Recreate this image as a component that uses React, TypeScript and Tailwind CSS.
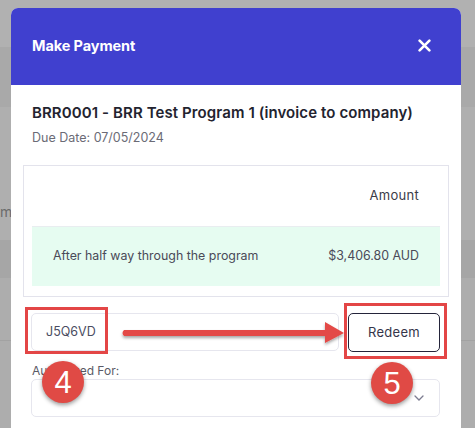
import React from 'react';

const font = "font-['Inter','Noto_Sans',sans-serif]";

const Backdrop: React.FC = () => {
  return (
    <div className="flex flex-col w-full h-full">
      <div className="h-[47px] bg-[#b1b1b1]" />
      <div className="h-[60px] bg-[#a9a9a9]" />
      <div className="h-[133px] bg-[#afafaf] relative">
        <span className="absolute left-0 top-[94px] text-[14px] text-[#6b6b6b]">m</span>
      </div>
      <div className="h-[38px] bg-[#a6a6a6]" />
      <div className="h-[63px] bg-[#adadad] border-b border-[#a2a2a2]" />
      <div className="flex-1 bg-[#adadad]" />
    </div>
  );
};

const Annotations: React.FC = () => {
  return (
    <>
      <div className="absolute left-[25px] top-[307px] w-[83px] h-[47px] border-[3px] border-[#e34646]" />
      <div className="absolute left-[344px] top-[303px] w-[103px] h-[56px] border-[3px] border-[#e34646]" />
      <svg className="absolute left-[118px] top-[318px]" width="230" height="30" viewBox="0 0 230 30">
        <defs>
          <filter id="sh" x="-10%" y="-50%" width="120%" height="200%">
            <feDropShadow dx="0" dy="2" stdDeviation="1.5" floodColor="#000" floodOpacity="0.35" />
          </filter>
        </defs>
        <g filter="url(#sh)">
          <path d="M6 12 L207 12 L207 4 L226 15 L207 25 L207 18 L6 18 Q3 15 6 12 Z" fill="#e34a46" />
        </g>
      </svg>
      {[
        { n: '4', cls: 'left-[42px] top-[361px]' },
        { n: '5', cls: 'left-[371px] top-[362px]' },
      ].map((c) => (
        <div
          key={c.n}
          className={`absolute ${c.cls} w-[42px] h-[42px] rounded-full bg-[#e04a45] shadow-[0_2px_4px_rgba(0,0,0,0.4)] flex items-center justify-center text-white text-[31px] leading-none font-['Liberation_Sans',sans-serif]`}
        >
          {c.n}
        </div>
      ))}
    </>
  );
};

export default function App() {
  return (
    <div className={`relative w-[475px] h-[428px] overflow-hidden ${font}`}>
      <Backdrop />
      <div className="absolute left-[11px] top-[8px] w-[450px] h-[430px] bg-white rounded-t-[7px] overflow-hidden flex flex-col">
        <div className="h-[77px] bg-[#4040cf] flex items-center justify-between pl-[21px] pr-[30px] shrink-0">
          <span className="text-white text-[14.5px] font-bold tracking-[-0.1px] mt-[-1px]">Make Payment</span>
          <svg width="13" height="13" viewBox="0 0 12 12" className="mt-[-2px]">
            <path d="M1.5 1.5 L10.5 10.5 M10.5 1.5 L1.5 10.5" stroke="white" strokeWidth="2.4" strokeLinecap="round" />
          </svg>
        </div>
        <div className="px-[12px] pt-[17px] flex flex-col">
          <div className="px-[9px]">
            <div className="text-[15px] leading-[22px] font-semibold text-[#23232f] tracking-[0.1px]">
              BRR0001 - BRR Test Program 1 (invoice to company)
            </div>
            <div className="text-[12.5px] leading-[18px] text-[#6b6b76] mt-[5px]">Due Date: 07/05/2024</div>
          </div>
          <div className="mt-[18px] border border-[#e3e3ec] h-[132px] px-[8px] flex flex-col">
            <div className="h-[60px] flex items-center justify-end pr-[21px] text-[13px] tracking-[0.3px] text-[#3c3c48]">
              Amount
            </div>
            <div className="h-[60px] bg-[#e6fcf1] border-t border-[#e9edf0] flex items-center justify-between pl-[21px] pr-[21px] text-[12.4px] text-[#4a4a58]">
              <span>After half way through the program</span>
              <span>$3,406.80 AUD</span>
            </div>
          </div>
        </div>
        <div className="pl-[20px] pr-[21px] mt-[16px] flex gap-[9px]">
          <div className="flex-1 h-[38px] border border-[#e6e6ee] rounded-[5px] flex items-center pl-[14px] text-[12.5px] text-[#4a4d62]">
            J5Q6VD
          </div>
          <button className="w-[92px] h-[39px] border border-[#24243a] rounded-[5px] flex items-center justify-center text-[13px] tracking-[0.3px] text-[#35354a]">
            Redeem
          </button>
        </div>
        <div className="pl-[21px] mt-[11px] text-[12px] leading-[16px] text-[#5a5a66]">Authorized For:</div>
        <div className="ml-[20px] mr-[21px] mt-[0px] h-[38px] border border-[#e6e6ee] rounded-[5px] flex items-center justify-end pr-[15px]">
          <svg width="10" height="6" viewBox="0 0 10 6">
            <path d="M1 1 L5 5 L9 1" stroke="#7c7c90" strokeWidth="1.3" fill="none" strokeLinecap="round" />
          </svg>
        </div>
      </div>
      <Annotations />
    </div>
  );
}
